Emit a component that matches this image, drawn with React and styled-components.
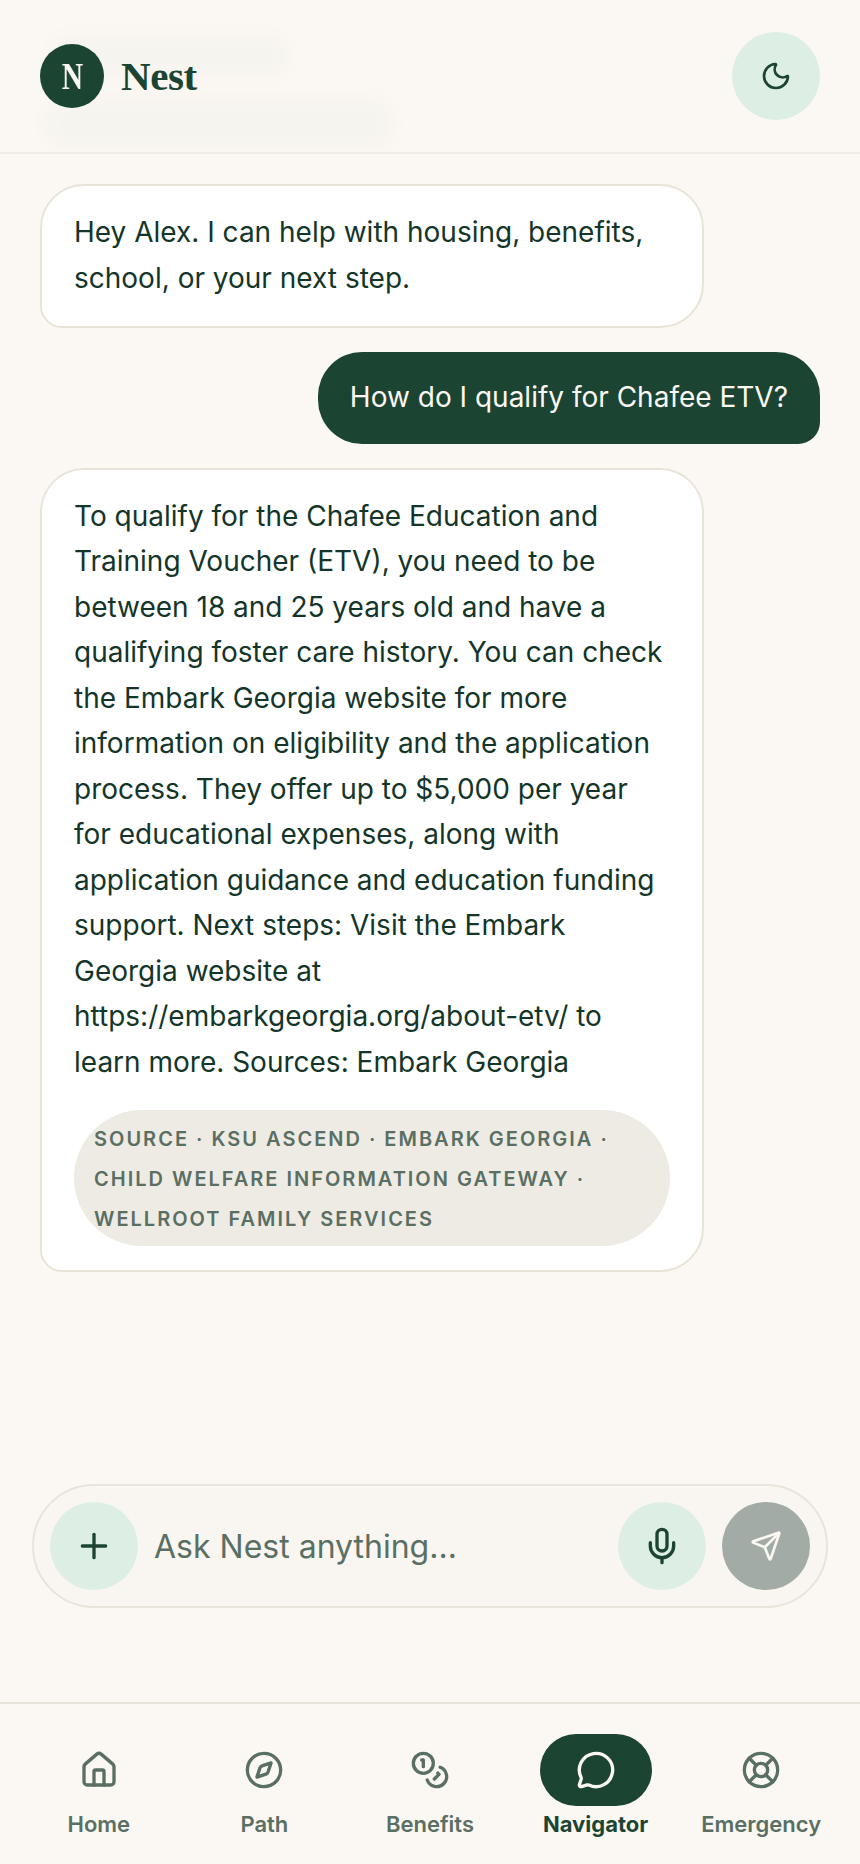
import styled, { createGlobalStyle } from 'styled-components';
import { Coins, Compass, House, LifeBuoy, MessageCircle, Mic, Moon, Plus, Send } from 'lucide-react';

const GlobalStyle = createGlobalStyle`
  html, body {
    margin: 0;
    padding: 0;
    background: #fbf8f3;
  }
  * {
    box-sizing: border-box;
  }
`;

const Page = styled.div`
  display: flex;
  flex-direction: column;
  width: 860px;
  min-height: 1864px;
  background: #fbf8f3;
  color: #14352a;
  font-family: Inter, 'Liberation Sans', sans-serif;
`;

const Header = styled.header`
  position: relative;
  display: flex;
  align-items: center;
  justify-content: space-between;
  height: 154px;
  padding: 32px 40px;
  border-bottom: 2px solid #efece5;
  overflow: hidden;
`;

const HeaderHaze = styled.div`
  position: absolute;
  left: ${(p) => p.$left}px;
  top: ${(p) => p.$top}px;
  width: ${(p) => p.$width}px;
  height: ${(p) => p.$height}px;
  border-radius: 24px;
  background: #14352a;
  opacity: 0.018;
  filter: blur(12px);
  pointer-events: none;
`;

const Brand = styled.div`
  position: relative;
  display: flex;
  align-items: center;
  gap: 17px;
`;

const LogoMark = styled.div`
  display: flex;
  align-items: center;
  justify-content: center;
  width: 64px;
  height: 64px;
  border-radius: 50%;
  background: #1c4433;
  color: #fbf8f3;
  font-family: 'Liberation Serif', serif;
  font-size: 37px;
  font-weight: 700;
`;

const LogoLetter = styled.span`
  display: block;
  transform: scaleX(0.8);
`;

const Wordmark = styled.span`
  font-family: 'Liberation Serif', serif;
  font-size: 41px;
  font-weight: 700;
  letter-spacing: -0.4px;
  color: #1c4433;
`;

const RoundButton = styled.button`
  position: relative;
  display: flex;
  flex: none;
  align-items: center;
  justify-content: center;
  width: 88px;
  height: 88px;
  padding: 0;
  border: none;
  border-radius: 50%;
  background: ${(p) => (p.$disabled ? '#a2aba5' : '#ddeee4')};
  color: ${(p) => (p.$disabled ? '#fbf8f3' : '#1c4433')};
`;

const Chat = styled.main`
  display: flex;
  flex: 1;
  flex-direction: column;
  gap: 24px;
  padding: 30px 40px 0;
`;

const AssistantBubble = styled.div`
  width: 664px;
  padding: 24px 32px 25px;
  border: 2px solid #e8e4da;
  border-radius: 44px 44px 44px 22px;
  background: #ffffff;
  font-size: 28px;
  line-height: 45.5px;
  color: #14352a;
`;

const UserBubble = styled.div`
  align-self: flex-end;
  padding: 23px 32px;
  border-radius: 44px 44px 22px 44px;
  background: #1c4433;
  color: #fbf8f3;
  font-size: 28px;
  line-height: 45.5px;
`;

const SourcePill = styled.div`
  margin: 25px 0 -1px;
  padding: 9px 20px 7px;
  border-radius: 68px;
  background: #eeebe4;
  color: #5a6f63;
  font-size: 20px;
  font-weight: 600;
  line-height: 40px;
  letter-spacing: 2px;
  text-transform: uppercase;
`;

const Composer = styled.form`
  display: flex;
  align-items: center;
  gap: 16px;
  height: 124px;
  margin: 0 32px 94px;
  padding: 0 16px;
  border: 2px solid #e8e4da;
  border-radius: 62px;
  background: #f9f6f1;
`;

const Placeholder = styled.span`
  flex: 1;
  font-size: 32px;
  color: #5a6f63;
`;

const Nav = styled.nav`
  display: grid;
  grid-template-columns: repeat(5, 1fr);
  height: 162px;
  padding: 30px 16px 0;
  border-top: 2px solid #e8e4da;
`;

const NavItem = styled.a`
  display: flex;
  flex-direction: column;
  align-items: center;
  gap: 2px;
  color: ${(p) => (p.$active ? '#1c4433' : '#5a6f63')};
  font-size: 22px;
  font-weight: ${(p) => (p.$active ? 700 : 600)};
  line-height: 32px;
`;

const NavIcon = styled.span`
  display: flex;
  align-items: center;
  justify-content: center;
  width: 112px;
  height: 72px;
  border-radius: 36px;
  background: ${(p) => (p.$active ? '#1c4433' : 'transparent')};
  color: ${(p) => (p.$active ? '#fbf8f3' : '#5a6f63')};
`;

const navItems = [
  { label: 'Home', icon: House },
  { label: 'Path', icon: Compass },
  { label: 'Benefits', icon: Coins },
  { label: 'Navigator', icon: MessageCircle, active: true },
  { label: 'Emergency', icon: LifeBuoy },
];

export default function App() {
  return (
    <Page>
      <GlobalStyle />
      <Header>
        <HeaderHaze $left={50} $top={36} $width={240} $height={40} />
        <HeaderHaze $left={44} $top={98} $width={350} $height={50} />
        <Brand>
          <LogoMark>
            <LogoLetter>N</LogoLetter>
          </LogoMark>
          <Wordmark>Nest</Wordmark>
        </Brand>
        <RoundButton type="button">
          <Moon size={32} strokeWidth={2} />
        </RoundButton>
      </Header>
      <Chat>
        <AssistantBubble>
          Hey Alex. I can help with housing, benefits, school, or your next step.
        </AssistantBubble>
        <UserBubble>How do I qualify for Chafee ETV?</UserBubble>
        <AssistantBubble>
          To qualify for the Chafee Education and Training Voucher (ETV), you need to be between 18
          and 25 years old and have a qualifying foster care history. You can check the Embark
          Georgia website for more information on eligibility and the application process. They
          offer up to $5,000 per year for educational expenses, along with application guidance and
          education funding support. Next steps: Visit the Embark Georgia website at
          https://embarkgeorgia.org/about-etv/ to learn more. Sources: Embark Georgia
          <SourcePill>
            Source · KSU Ascend · Embark Georgia · Child Welfare Information Gateway · Wellroot
            Family Services
          </SourcePill>
        </AssistantBubble>
      </Chat>
      <Composer>
        <RoundButton type="button">
          <Plus size={40} strokeWidth={2} />
        </RoundButton>
        <Placeholder>Ask Nest anything...</Placeholder>
        <RoundButton type="button">
          <Mic size={40} strokeWidth={2} />
        </RoundButton>
        <RoundButton type="button" $disabled>
          <Send size={32} strokeWidth={2} />
        </RoundButton>
      </Composer>
      <Nav>
        {navItems.map(({ label, icon: Icon, active }) => (
          <NavItem key={label} $active={active}>
            <NavIcon $active={active}>
              <Icon size={40} strokeWidth={2} />
            </NavIcon>
            {label}
          </NavItem>
        ))}
      </Nav>
    </Page>
  );
}
